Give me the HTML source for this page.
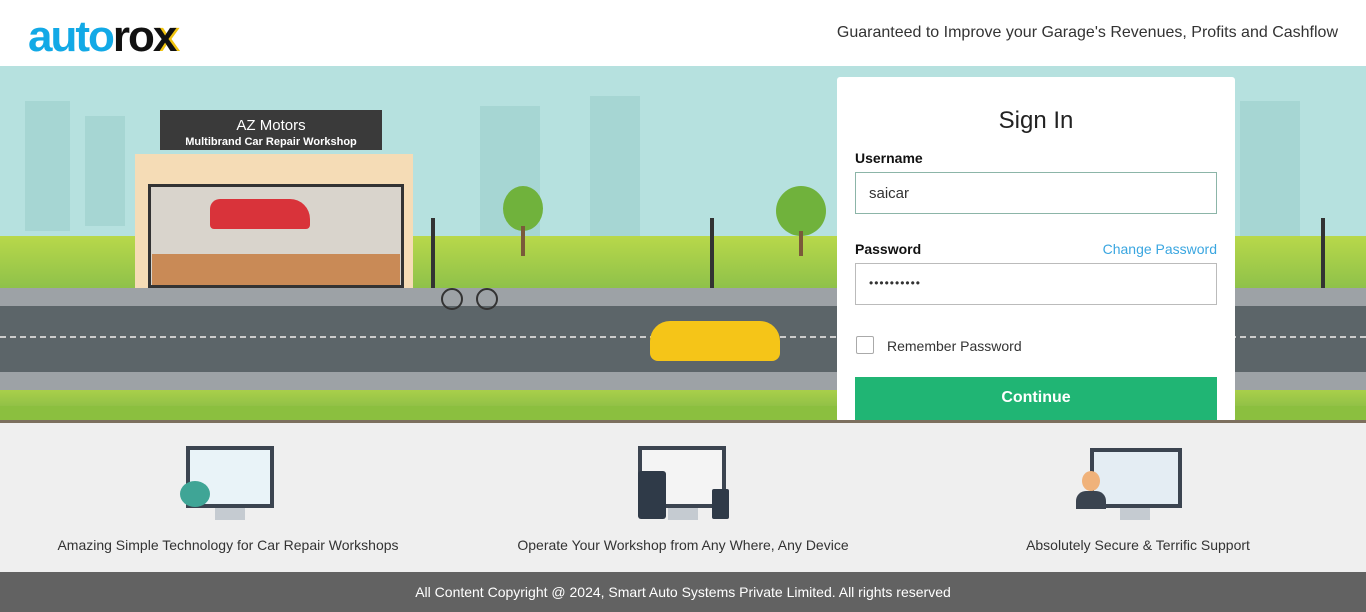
<!DOCTYPE html>
<html><head><meta charset="utf-8"><style>
*{margin:0;padding:0;box-sizing:border-box}
body{width:1366px;height:612px;overflow:hidden;font-family:"Liberation Sans",sans-serif;background:#fff;position:relative}
.hdr{height:66px;position:relative}
.logo{position:absolute;left:28px;top:12px;font-size:44px;font-weight:bold;letter-spacing:-2px;line-height:50px}
.tag{position:absolute;right:28px;top:24px;font-size:16px;color:#333}
.scene{position:absolute;top:66px;left:0;width:1366px;height:355px;background:#b6e1df;overflow:hidden}
.abs{position:absolute}
.card{position:absolute;left:837px;top:77px;width:398px;height:345px;background:#fff;border-radius:3px}
.card h1{position:absolute;top:30px;width:100%;text-align:center;font-size:24px;font-weight:normal;color:#222}
.lbl{position:absolute;font-size:14px;color:#111;font-weight:bold}
.inp{position:absolute;left:18px;width:362px;height:42px;border:1px solid #bbb;font-size:15px;color:#333;padding:12px 13px}
.btn{position:absolute;left:18px;top:300px;width:362px;height:45px;background:#20b574;color:#fff;font-weight:bold;font-size:16px;text-align:center;line-height:42px}
.feat{position:absolute;top:423px;left:0;width:1366px;height:149px;background:#efefef}
.ft{position:absolute;top:114px;font-size:14px;color:#333;text-align:center;width:440px}
.foot{position:absolute;top:572px;left:0;width:1366px;height:40px;background:#626262;color:#fff;font-size:14px;text-align:center;line-height:40px}
.lamp{position:absolute;width:4px;height:70px;background:#333}
</style></head><body>
<div class="hdr"><div class="logo"><span style="color:#12a9e6">auto</span><span style="color:#111">ro</span><span style="color:#111;text-shadow:3px 0 0 #f1c40f">x</span></div>
<div class="tag">Guaranteed to Improve your Garage's Revenues, Profits and Cashflow</div></div>
<div class="scene">
 <div class="abs" style="left:25px;top:35px;width:45px;height:130px;background:#a6d6d3"></div>
 <div class="abs" style="left:85px;top:50px;width:40px;height:110px;background:#a6d6d3"></div>
 <div class="abs" style="left:480px;top:40px;width:60px;height:130px;background:#a6d6d3"></div>
 <div class="abs" style="left:590px;top:30px;width:50px;height:140px;background:#a6d6d3"></div>
 <div class="abs" style="left:1240px;top:35px;width:60px;height:140px;background:#a6d6d3"></div>
 <div class="abs" style="left:0;top:170px;width:1366px;height:55px;background:linear-gradient(#b8d84a,#8cc04a)"></div>
 <div class="abs" style="left:0;top:222px;width:1366px;height:18px;background:#9da2a6"></div>
 <div class="abs" style="left:0;top:240px;width:1366px;height:66px;background:#5c6569"></div>
 <div class="abs" style="left:0;top:270px;width:1366px;height:0;border-top:2px dashed #ccc"></div>
 <div class="abs" style="left:0;top:306px;width:1366px;height:18px;background:#9da2a6"></div>
 <div class="abs" style="left:0;top:324px;width:1366px;height:31px;background:linear-gradient(#a9cf4a,#7cb443)"></div>
 <div class="abs" style="left:135px;top:88px;width:278px;height:134px;background:#f5dcb6"></div>
 <div class="abs" style="left:148px;top:118px;width:256px;height:104px;background:#d9d4cc;border:3px solid #333"></div>
 <div class="abs" style="left:152px;top:188px;width:248px;height:31px;background:#c98a56"></div>
 <div class="abs" style="left:160px;top:44px;width:222px;height:40px;background:#3a3a3a;color:#fff;text-align:center;font-size:15px;line-height:15px;padding-top:8px">AZ Motors<br><span style="font-size:11px;font-weight:bold">Multibrand Car Repair Workshop</span></div>
 <div class="abs" style="left:210px;top:133px;width:100px;height:30px;background:#d9333a;border-radius:10px 20px 4px 4px"></div>
 <div class="abs" style="left:503px;top:120px;width:40px;height:45px;background:#70b23c;border-radius:50%"></div>
 <div class="abs" style="left:521px;top:160px;width:4px;height:30px;background:#7a5a3a"></div>
 <div class="abs" style="left:776px;top:120px;width:50px;height:50px;background:#70b23c;border-radius:50%"></div>
 <div class="abs" style="left:799px;top:165px;width:4px;height:25px;background:#7a5a3a"></div>
 <div class="lamp" style="left:431px;top:152px"></div>
 <div class="lamp" style="left:710px;top:152px"></div>
 <div class="lamp" style="left:1321px;top:152px"></div>
 <div class="abs" style="left:441px;top:222px;width:22px;height:22px;border:2px solid #333;border-radius:50%"></div>
 <div class="abs" style="left:476px;top:222px;width:22px;height:22px;border:2px solid #333;border-radius:50%"></div>
 <div class="abs" style="left:650px;top:255px;width:130px;height:40px;background:#f5c518;border-radius:20px 20px 8px 8px"></div>
 <div class="abs" style="left:0;top:340px;width:1366px;height:15px;background:#8bbf3f"></div>
</div>
<div class="card">
 <h1>Sign In</h1>
 <div class="lbl" style="left:18px;top:73px">Username</div>
 <div class="inp" style="top:95px;border-color:#8cb5a8">saicar</div>
 <div class="lbl" style="left:18px;top:164px">Password</div>
 <div class="abs" style="right:18px;top:164px;font-size:14px;color:#3aa6e0">Change Password</div>
 <div class="inp" style="top:186px;font-size:12px;letter-spacing:1px">••••••••••</div>
 <div class="abs" style="left:19px;top:259px;width:18px;height:18px;border:1px solid #aaa;border-radius:2px"></div>
 <div class="abs" style="left:50px;top:261px;font-size:14px;color:#333">Remember Password</div>
 <div class="btn">Continue</div>
</div>
<div class="abs" style="left:0;top:420px;width:1366px;height:3px;background:#7c6f5e"></div>
<div class="feat">
 <div class="abs" style="left:186px;top:23px;width:88px;height:62px;background:#3b4450;border:4px solid #3b4450"><div style="background:#e9f3f8;width:100%;height:100%"></div></div>
 <div class="abs" style="left:215px;top:85px;width:30px;height:12px;background:#c5cbd1"></div>
 <div class="abs" style="left:180px;top:58px;width:30px;height:26px;background:#3fa596;border-radius:50%"></div>
 <div class="abs" style="left:638px;top:23px;width:88px;height:62px;background:#3b4450;border:4px solid #3b4450"><div style="background:#f4f4f4;width:100%;height:100%"></div></div>
 <div class="abs" style="left:668px;top:85px;width:30px;height:12px;background:#c5cbd1"></div>
 <div class="abs" style="left:638px;top:48px;width:28px;height:48px;background:#2f3a48;border-radius:3px"></div>
 <div class="abs" style="left:712px;top:66px;width:17px;height:30px;background:#2f3a48;border-radius:2px"></div>
 <div class="abs" style="left:1090px;top:25px;width:92px;height:60px;background:#3b4450;border:4px solid #3b4450"><div style="background:#e4edf3;width:100%;height:100%"></div></div>
 <div class="abs" style="left:1120px;top:85px;width:30px;height:12px;background:#c5cbd1"></div>
 <div class="abs" style="left:1076px;top:68px;width:30px;height:18px;background:#3b4450;border-radius:10px 10px 0 0"></div>
 <div class="abs" style="left:1082px;top:48px;width:18px;height:20px;background:#f0b27a;border-radius:50%"></div>
 <div class="ft" style="left:8px">Amazing Simple Technology for Car Repair Workshops</div>
 <div class="ft" style="left:463px">Operate Your Workshop from Any Where, Any Device</div>
 <div class="ft" style="left:918px">Absolutely Secure &amp; Terrific Support</div>
</div>
<div class="foot">All Content Copyright @ 2024, Smart Auto Systems Private Limited. All rights reserved</div>
</body></html>
